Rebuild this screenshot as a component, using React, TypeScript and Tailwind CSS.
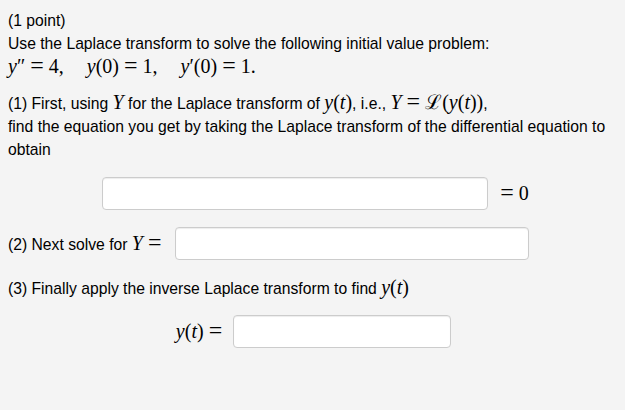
import type { ReactNode } from 'react'

function M({ children, className = '' }: { children: ReactNode; className?: string }) {
  return <span className={`font-['Liberation_Serif','Times_New_Roman',serif] text-[20px] ${className}`}>{children}</span>
}

function I({ children }: { children: ReactNode }) {
  return <i className="italic">{children}</i>
}

// relation symbol with TeX-like thick spacing
function Eq() {
  return <span className="mx-[5px] text-[24px] leading-[0px]">=</span>
}

function AnswerBox({ width }: { width: string }) {
  return (
    <input
      type="text"
      className={`h-[33px] ${width} rounded-[4px] border border-[#cccccc] bg-white shadow-[inset_0_1px_1px_rgba(0,0,0,0.075)] outline-none`}
    />
  )
}

export default function App() {
  return (
    <div className="min-h-[410px] bg-[#f4f4f4] px-2 pt-[9px] font-['Liberation_Sans',Arial,sans-serif] text-[15.7px] leading-[23px] text-black">
      <p>(1 point)</p>
      <p>Use the Laplace transform to solve the following initial value problem:</p>
      <p>
        <M>
          <I>y</I>″<Eq />4,
          <span className="ml-[23px]" />
          <I>y</I>(0)<Eq />1,
          <span className="ml-[23px]" />
          <I>y</I>′(0)<Eq />1.
        </M>
      </p>

      <p className="mt-[12px]">
        (1) First, using <M><I>Y</I></M> for the Laplace transform of <M><I>y</I>(<I>t</I>)</M>, i.e.,{' '}
        <M>
          <I>Y</I>
          <Eq />
          ℒ(<I>y</I>(<I>t</I>))
        </M>
        ,
        <br />
        find the equation you get by taking the Laplace transform of the differential equation to
        <br />
        obtain
      </p>

      <div className="mt-[16px] flex items-center justify-center gap-[7px] pl-[6px]">
        <AnswerBox width="w-[386px]" />
        <M>
          <Eq />0
        </M>
      </div>

      <div className="mt-[17px] flex items-center gap-[9px]">
        <span>
          (2) Next solve for{' '}
          <M>
            <I>Y</I>
            <Eq />
          </M>
        </span>
        <AnswerBox width="w-[354px]" />
      </div>

      <p className="mt-[16px]">
        (3) Finally apply the inverse Laplace transform to find <M><I>y</I>(<I>t</I>)</M>
      </p>

      <div className="mt-[15px] flex items-center justify-center gap-[6px] pl-[2px]">
        <M>
          <I>y</I>(<I>t</I>)
          <Eq />
        </M>
        <AnswerBox width="w-[218px]" />
      </div>
    </div>
  )
}
